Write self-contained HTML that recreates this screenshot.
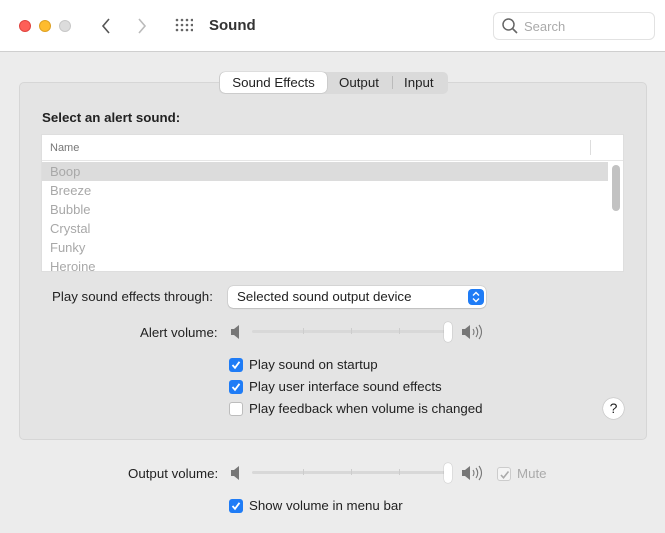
<!DOCTYPE html><html><head><style>
*{box-sizing:border-box;margin:0;padding:0}
body{width:665px;height:533px;background:#ececec;font-family:"Liberation Sans",sans-serif;font-size:13.3px;color:#222;position:relative;overflow:hidden}
.a{position:absolute}
.top{left:0;top:0;width:665px;height:52px;background:#fff;border-bottom:1px solid #cfcfcf}
.dot{width:12px;height:12px;border-radius:50%;top:20px}
.grp{left:19px;top:82px;width:628px;height:358px;background:#e4e4e4;border:1px solid #d6d6d6;border-radius:5px}
.cb{width:14px;height:14px;border-radius:3px;background:#1f7cf6;}
.cb svg{position:absolute;left:2px;top:2px}
.cbo{width:14px;height:14px;border-radius:3px;background:#fff;border:1px solid #bdbdbd}
.row{left:42px;width:566px;height:19px;color:#a8a8a8;padding-left:8px;line-height:19px;font-size:13px}
.trk{height:3px;background:#d8d8d8;border-radius:2px}
.tick{width:1px;height:6px;background:#cdcdcd}
.knob{width:8px;height:20px;background:#fff;border-radius:4px;box-shadow:0 0 1px rgba(0,0,0,.4)}
</style></head><body>
<div class="a top"></div>
<div class="a dot" style="left:19px;background:#fe5f57;border:1px solid #e0443e"></div>
<div class="a dot" style="left:39px;background:#febc2e;border:1px solid #dea123"></div>
<div class="a dot" style="left:59px;background:#dcdcdc;border:1px solid #c8c8c8"></div>
<svg class="a" style="left:100px;top:17px" width="12" height="18"><path d="M9 2 L3 9 L9 16" stroke="#555" stroke-width="1.6" fill="none"/></svg>
<svg class="a" style="left:136px;top:17px" width="12" height="18"><path d="M3 2 L9 9 L3 16" stroke="#bbb" stroke-width="1.6" fill="none"/></svg>
<svg class="a" style="left:175px;top:18px" width="18" height="16" fill="#666"><circle cx="2" cy="2" r="1.3"/><circle cx="7" cy="2" r="1.3"/><circle cx="12" cy="2" r="1.3"/><circle cx="17" cy="2" r="1.3"/><circle cx="2" cy="7" r="1.3"/><circle cx="7" cy="7" r="1.3"/><circle cx="12" cy="7" r="1.3"/><circle cx="17" cy="7" r="1.3"/><circle cx="2" cy="12" r="1.3"/><circle cx="7" cy="12" r="1.3"/><circle cx="12" cy="12" r="1.3"/><circle cx="17" cy="12" r="1.3"/></svg>
<div class="a" style="left:209px;top:17px;font-size:15px;font-weight:bold;color:#333">Sound</div>
<div class="a" style="left:493px;top:12px;width:162px;height:28px;border:1px solid #e2e2e2;border-radius:6px;background:#fff"></div>
<svg class="a" style="left:501px;top:17px" width="18" height="18"><circle cx="7.5" cy="7.5" r="5.5" stroke="#666" stroke-width="1.5" fill="none"/><path d="M11.5 11.5 L16 16" stroke="#666" stroke-width="1.6"/></svg>
<div class="a" style="left:524px;top:19px;color:#aaa;font-size:13px">Search</div>
<div class="a grp"></div>
<div class="a" style="left:219px;top:72px;width:229px;height:22px;background:#dadada;border-radius:5px"></div>
<div class="a" style="left:220px;top:72px;width:107px;height:21px;background:#fff;border-radius:5px;box-shadow:0 0 1px rgba(0,0,0,.4);text-align:center;line-height:21px">Sound Effects</div>
<div class="a" style="left:339px;top:75px">Output</div>
<div class="a" style="left:392px;top:76px;width:1px;height:13px;background:#bbb"></div>
<div class="a" style="left:404px;top:75px">Input</div>
<div class="a" style="left:42px;top:110px;font-weight:bold">Select an alert sound:</div>
<div class="a" style="left:41px;top:134px;width:583px;height:138px;background:#fff;border:1px solid #dedede"></div>
<div class="a" style="left:50px;top:142px;font-size:11px;color:#777">Name</div>
<div class="a" style="left:590px;top:140px;width:1px;height:15px;background:#ddd"></div>
<div class="a" style="left:42px;top:160px;width:581px;height:1px;background:#e6e6e6"></div>
<div class="a row" style="top:162px;background:#dcdcdc">Boop</div>
<div class="a row" style="top:181px">Breeze</div>
<div class="a row" style="top:200px">Bubble</div>
<div class="a row" style="top:219px">Crystal</div>
<div class="a row" style="top:238px">Funky</div>
<div class="a row" style="top:257px;height:14px;overflow:hidden">Heroine</div>
<div class="a" style="left:612px;top:165px;width:8px;height:46px;background:#c2c2c2;border-radius:4px"></div>
<div class="a" style="left:52px;top:289px">Play sound effects through:</div>
<div class="a" style="left:228px;top:286px;width:258px;height:22px;background:#fff;border-radius:5px;box-shadow:0 0 1px rgba(0,0,0,.45),0 1px 1px rgba(0,0,0,.1);padding-left:9px;line-height:22px">Selected sound output device</div>
<div class="a" style="left:468px;top:289px;width:16px;height:16px;background:#1f7cf6;border-radius:4px"><svg width="16" height="16"><path d="M5 6.5 L8 3.5 L11 6.5 M5 9.5 L8 12.5 L11 9.5" stroke="#fff" stroke-width="1.4" fill="none"/></svg></div>
<div class="a" style="left:140px;top:325px">Alert volume:</div>
<svg class="a" style="left:230px;top:324px" width="12" height="16"><path d="M1 5h3l5-4v14l-5-4H1z" fill="#777"/></svg>
<div class="a trk" style="left:252px;top:330px;width:196px"></div>
<div class="a tick" style="left:303px;top:328px"></div><div class="a tick" style="left:351px;top:328px"></div><div class="a tick" style="left:399px;top:328px"></div>
<div class="a knob" style="left:444px;top:322px"></div>
<svg class="a" style="left:461px;top:323px" width="24" height="18"><path d="M1 6h3l5-4v14l-5-4H1z" fill="#777"/><path d="M12 6q2 3 0 6M15 4q3.5 5 0 10M18 2q5 7 0 14" stroke="#777" stroke-width="1.1" fill="none"/></svg>
<div class="a cb" style="left:229px;top:358px"><svg width="10" height="10"><path d="M1.5 5 L4 7.8 L8.5 1.8" stroke="#fff" stroke-width="1.8" fill="none"/></svg></div>
<div class="a" style="left:249px;top:357px">Play sound on startup</div>
<div class="a cb" style="left:229px;top:380px"><svg width="10" height="10"><path d="M1.5 5 L4 7.8 L8.5 1.8" stroke="#fff" stroke-width="1.8" fill="none"/></svg></div>
<div class="a" style="left:249px;top:379px">Play user interface sound effects</div>
<div class="a cbo" style="left:229px;top:402px"></div>
<div class="a" style="left:249px;top:401px">Play feedback when volume is changed</div>
<div class="a" style="left:603px;top:398px;width:21px;height:21px;border-radius:50%;background:#fff;box-shadow:0 0 1px rgba(0,0,0,.5);text-align:center;line-height:21px;font-size:14px">?</div>
<div class="a" style="left:128px;top:466px">Output volume:</div>
<svg class="a" style="left:230px;top:465px" width="12" height="16"><path d="M1 5h3l5-4v14l-5-4H1z" fill="#777"/></svg>
<div class="a trk" style="left:252px;top:471px;width:196px"></div>
<div class="a tick" style="left:303px;top:469px"></div><div class="a tick" style="left:351px;top:469px"></div><div class="a tick" style="left:399px;top:469px"></div>
<div class="a knob" style="left:444px;top:463px"></div>
<svg class="a" style="left:461px;top:464px" width="24" height="18"><path d="M1 6h3l5-4v14l-5-4H1z" fill="#777"/><path d="M12 6q2 3 0 6M15 4q3.5 5 0 10M18 2q5 7 0 14" stroke="#777" stroke-width="1.1" fill="none"/></svg>
<div class="a" style="left:497px;top:467px;width:14px;height:14px;border-radius:3px;background:#f4f4f4;border:1px solid #ccc"><svg width="12" height="12" style="position:absolute;left:1px;top:1px"><path d="M2 6 L4.5 8.8 L9.5 2.5" stroke="#aaa" stroke-width="1.6" fill="none"/></svg></div>
<div class="a" style="left:517px;top:466px;color:#aaa">Mute</div>
<div class="a cb" style="left:229px;top:499px"><svg width="10" height="10"><path d="M1.5 5 L4 7.8 L8.5 1.8" stroke="#fff" stroke-width="1.8" fill="none"/></svg></div>
<div class="a" style="left:249px;top:498px">Show volume in menu bar</div>
</body></html>
